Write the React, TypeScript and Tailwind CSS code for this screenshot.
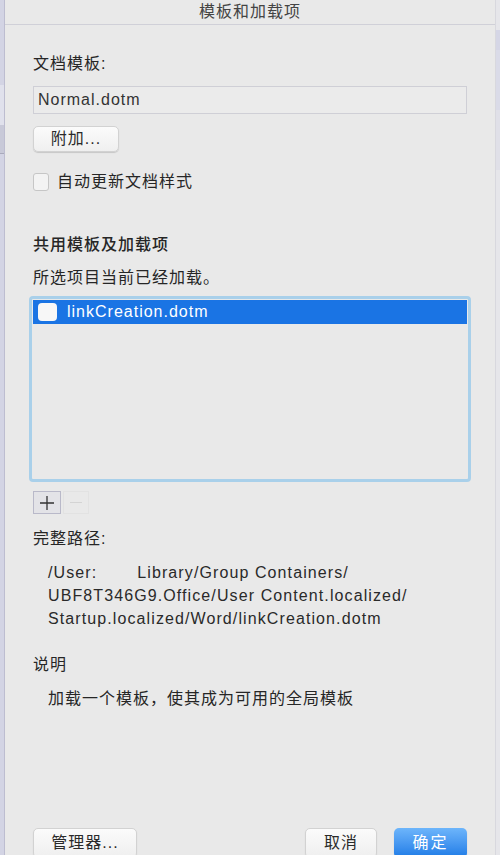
const font = { fontFamily: '"Liberation Sans", "Noto Sans CJK SC", sans-serif' };

const PushButton = ({ label, className }: { label: string; className: string }) => (
  <button
    className={`rounded-[5px] border border-[#d2d2d2] bg-gradient-to-b from-[#fbfbfb] to-[#efefef] text-[16px] tracking-[1px] text-[#2a2a2a] shadow-[0_1px_1px_rgba(0,0,0,0.15)] ${className}`}
  >
    {label}
  </button>
);

const App = () => {
  return (
    <div style={font} className="flex h-[855px] w-[500px] overflow-hidden bg-[#e9e9e9] text-[#262626]">
      {/* window behind, left edge */}
      <div className="flex w-[5px] flex-col border-r border-[#bdbdd0] bg-[#d3d4e4]">
        <div className="mt-[85px] h-[40px] bg-[#e0e1ec]" />
        <div className="h-[28px] bg-[#c8c9d8]" />
        <div className="h-px bg-[#a9aabb]" />
      </div>

      <div className="flex flex-1 flex-col">
        <div className="flex h-[25px] shrink-0 items-center justify-center border-b border-[#d0d0d8] text-[16px] tracking-[1px] text-[#444]">
          模板和加载项
        </div>

        <div className="flex flex-col px-[28px]">
          <div className="mt-[29px] text-[16px] leading-[20px] tracking-[1px]">文档模板:</div>

          <div className="mt-[12px] flex h-[28px] items-center border border-[#cfcfd6] bg-[#ebebeb] px-[4px] text-[16px] tracking-[1px] text-[#333]">
            Normal.dotm
          </div>

          <PushButton label="附加..." className="mt-[12px] h-[26px] w-[86px]" />

          <div className="mt-[20px] flex items-center gap-[8px]">
            <div className="h-[18px] w-[16px] rounded-[3px] border border-[#c6c6c6] bg-[#f3f3f3]" />
            <span className="text-[16px] leading-[20px] tracking-[1px]">自动更新文档样式</span>
          </div>

          <div className="mt-[43px] text-[16px] font-medium leading-[20px] tracking-[1px]">共用模板及加载项</div>
          <div className="mt-[13px] text-[16px] leading-[20px] tracking-[1px]">所选项目当前已经加载。</div>

          <div className="-mx-[4px] mt-[8px] h-[186px] rounded-[4px] border-[3px] border-[#a9d0ea] p-px">
            <div className="flex h-[24px] items-center gap-[10px] bg-[#1a74e4] pl-[5px] text-white">
              <div className="h-[18px] w-[19px] rounded-[4px] bg-[#f7f7f7]" />
              <span className="text-[16px] tracking-[1px]">linkCreation.dotm</span>
            </div>
          </div>

          <div className="mt-[9px] flex">
            <div className="flex h-[23px] w-[28px] items-center justify-center border border-[#b9b9c9] bg-[#e3e3e7]">
              <svg width="16" height="16" viewBox="0 0 16 16">
                <path d="M8 1v14M1 8h14" stroke="#333" strokeWidth="1.3" />
              </svg>
            </div>
            <div className="ml-[2px] flex h-[23px] w-[26px] items-center justify-center border border-[#e2e2e2]">
              <div className="h-px w-[12px] bg-[#d4d4d4]" />
            </div>
          </div>

          <div className="mt-[15px] text-[16px] leading-[20px] tracking-[1px]">完整路径:</div>
          <div className="mt-[12px] pl-[15px] text-[16px] leading-[23px] tracking-[1.1px] text-[#2a2a2a]">
            <div>
              /User:<span className="inline-block w-[40px]" />Library/Group Containers/
            </div>
            <div>UBF8T346G9.Office/User Content.localized/</div>
            <div>Startup.localized/Word/linkCreation.dotm</div>
          </div>

          <div className="mt-[25px] text-[16px] leading-[20px] tracking-[1px]">说明</div>
          <div className="mt-[14px] pl-[15px] text-[16px] leading-[20px] tracking-[1px]">
            加载一个模板，使其成为可用的全局模板
          </div>

          <div className="mt-[119px] flex items-start">
            <PushButton label="管理器..." className="h-[30px] w-[104px]" />
            <div className="flex-1" />
            <PushButton label="取消" className="h-[30px] w-[72px]" />
            <button className="ml-[17px] h-[30px] w-[73px] rounded-[5px] bg-gradient-to-b from-[#6db5fb] to-[#1b7be6] text-[16px] tracking-[2px] text-white shadow-[0_1px_1px_rgba(0,0,0,0.2)]">
              确定
            </button>
          </div>
        </div>
      </div>

      {/* window behind, right edge */}
      <div className="flex w-[5px] flex-col border-l border-[#d8d8de] bg-[#e6e6ea]">
        <div className="mt-[30px] h-[20px] bg-[#d5d6e6]" />
        <div className="h-[60px] bg-[#dadbe8]" />
        <div className="h-[60px] bg-[#e0e0e8]" />
      </div>
    </div>
  );
};

export default App;
